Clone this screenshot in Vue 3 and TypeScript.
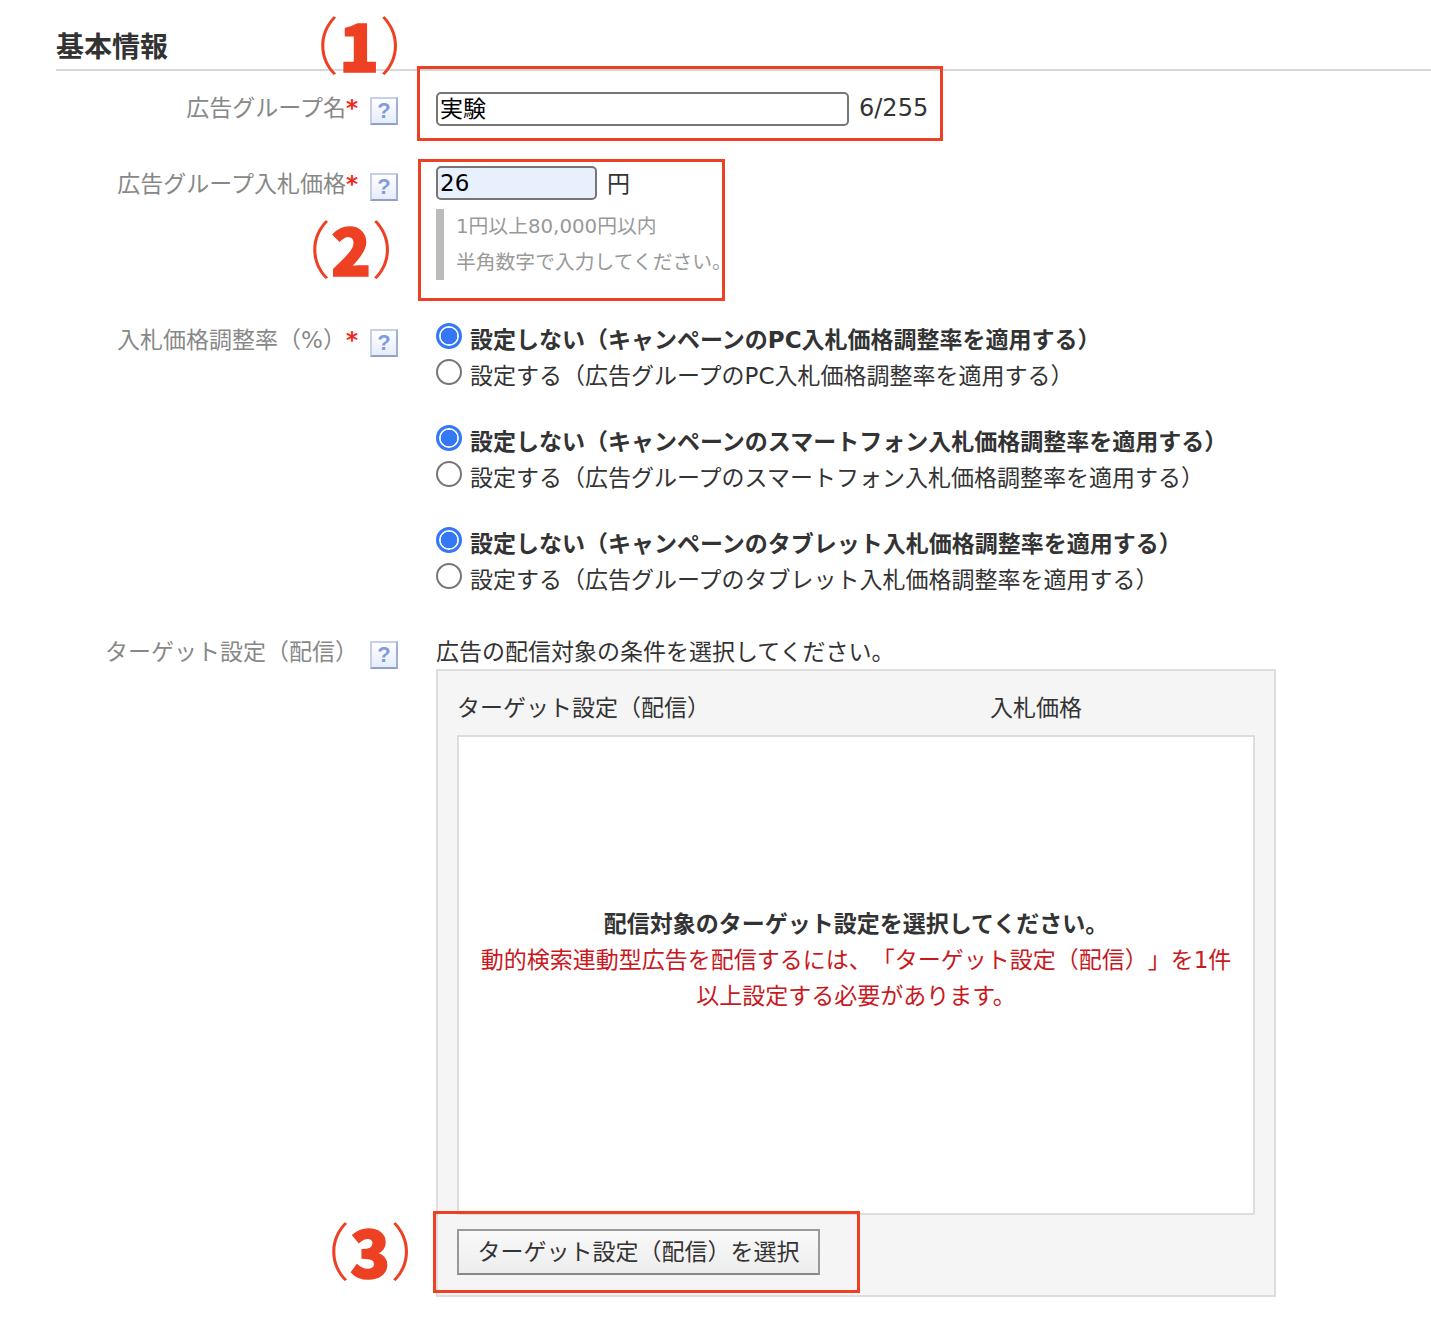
<script setup lang="ts">
interface Choice { off: string; on: string }
const choices: Choice[] = [
  { off: '設定しない（キャンペーンのPC入札価格調整率を適用する）', on: '設定する（広告グループのPC入札価格調整率を適用する）' },
  { off: '設定しない（キャンペーンのスマートフォン入札価格調整率を適用する）', on: '設定する（広告グループのスマートフォン入札価格調整率を適用する）' },
  { off: '設定しない（キャンペーンのタブレット入札価格調整率を適用する）', on: '設定する（広告グループのタブレット入札価格調整率を適用する）' },
]
</script>

<template>
  <div class="page">
    <h2 class="title">基本情報</h2>

    <div class="row row-name">
      <div class="label">広告グループ名<b class="req">*</b></div>
      <span class="help">?</span>
      <div class="field inline">
        <input class="text name" type="text" value="実験" />
        <span class="count">6/255</span>
      </div>
    </div>

    <div class="row row-price">
      <div class="label">広告グループ入札価格<b class="req">*</b></div>
      <span class="help">?</span>
      <div class="field">
        <div class="inline">
          <input class="text price" type="text" value="26" />
          <span>円</span>
        </div>
        <div class="hint">
          <p>1円以上80,000円以内</p>
          <p>半角数字で入力してください。</p>
        </div>
      </div>
    </div>

    <div class="row row-rate">
      <div class="label">入札価格調整率（%）<b class="req">*</b></div>
      <span class="help">?</span>
      <div class="field groups">
        <div v-for="(c, i) in choices" :key="i" class="group">
          <label class="radio strong"><input type="radio" :name="'g' + i" checked /><span>{{ c.off }}</span></label>
          <label class="radio"><input type="radio" :name="'g' + i" /><span>{{ c.on }}</span></label>
        </div>
      </div>
    </div>

    <div class="row row-target">
      <div class="label">ターゲット設定（配信）</div>
      <span class="help">?</span>
      <div class="field">
        <p class="lead">広告の配信対象の条件を選択してください。</p>
        <div class="panel">
          <div class="panel-head">
            <span class="col-a">ターゲット設定（配信）</span>
            <span>入札価格</span>
          </div>
          <div class="empty">
            <p class="empty-main">配信対象のターゲット設定を選択してください。</p>
            <p class="empty-note">動的検索連動型広告を配信するには、「ターゲット設定（配信）」を1件以上設定する必要があります。</p>
          </div>
          <button class="pick" type="button">ターゲット設定（配信）を選択</button>
        </div>
      </div>
    </div>

    <div class="mark box1"></div>
    <div class="mark box2"></div>
    <div class="mark box3"></div>
    <div class="num num1"><i>（</i><b>1</b><i>）</i></div>
    <div class="num num2"><i>（</i><b>2</b><i>）</i></div>
    <div class="num num3"><i>（</i><b>3</b><i>）</i></div>
  </div>
</template>

<style scoped>
.page {
  position: relative;
  width: 1431px;
  height: 1317px;
  overflow: hidden;
  padding-left: 56px;
  box-sizing: border-box;
  background: #fff;
  color: #333;
  font-family: "DejaVu Sans", "Noto Sans CJK JP", sans-serif;
  font-size: 23px;
  line-height: 36px;
  text-spacing-trim: space-all;
}
p { margin: 0; }
.title {
  margin: 0;
  padding: 31px 0 4px;
  font-size: 28px;
  line-height: 34px;
  font-weight: 700;
  border-bottom: 2px solid #d8d8d8;
}
.row {
  display: grid;
  grid-template-columns: 302px 78px 1fr;
  align-items: start;
}
.row-name { padding-top: 19px; }
.row-price { padding-top: 40px; }
.row-rate { padding-top: 42px; }
.row-target { padding-top: 36px; }
.label {
  color: #888;
  text-align: right;
  white-space: nowrap;
}
.req { color: #f0291c; font-weight: 700; }
.help {
  box-sizing: border-box;
  width: 28px;
  height: 28px;
  margin: 7px 0 0 12px;
  display: flex;
  align-items: center;
  justify-content: center;
  border: 2px solid #c4d0ea;
  border-right-color: #9fb0d0;
  border-bottom-color: #8fa2c6;
  background: linear-gradient(#fff, #e6ecfb);
  color: #829bdc;
  font-size: 22px;
  line-height: 1;
  font-weight: 700;
  font-family: "Liberation Sans", sans-serif;
}
.inline { display: flex; align-items: center; gap: 10px; }
.count { font-size: 24px; }
.text {
  box-sizing: border-box;
  height: 34px;
  padding: 0 2px;
  border: 2px solid #767676;
  border-radius: 5px;
  outline: none;
  color: #000;
  background: #fff;
  font: inherit;
}
.name { width: 413px; margin-top: 2px; }
.price { width: 161px; margin-bottom: 2px; background: #e8f0fe; }
.hint {
  box-sizing: border-box;
  width: 290px;
  margin-top: 7px;
  padding-left: 12px;
  border-left: 8px solid #bbb;
  color: #999;
  font-size: 19.8px;
  white-space: nowrap;
  line-height: 36px;
  height: 71px;
}
.groups { display: flex; flex-direction: column; gap: 30px; }
.radio { display: flex; align-items: center; gap: 8px; white-space: nowrap; height: 36px; }
.strong { font-weight: 700; }
.radio input {
  appearance: none;
  box-sizing: border-box;
  width: 26px;
  height: 26px;
  margin: -8px 0 0;
  border: 2px solid #767676;
  border-radius: 50%;
  background: #fff;
  flex: none;
}
.radio input:checked {
  border: 3px solid #3478f6;
  background: radial-gradient(circle, #3478f6 0 8px, #fff 8.6px);
}
.lead { height: 35px; }
.panel {
  box-sizing: border-box;
  width: 840px;
  height: 628px;
  border: 2px solid #ddd;
  background: #f5f5f5;
  padding: 19px 19px 0;
}
.panel-head { display: flex; height: 45px; }
.col-a { width: 533px; }
.empty {
  box-sizing: border-box;
  height: 480px;
  border: 2px solid #ddd;
  background: #fff;
  padding: 0 20px 30px;
  display: flex;
  flex-direction: column;
  justify-content: center;
  text-align: center;
}
.empty-main { font-weight: 700; }
.empty-note { color: #c8191e; }
.pick {
  display: block;
  box-sizing: border-box;
  width: 363px;
  height: 46px;
  margin-top: 14px;
  border: 2px solid #999;
  border-bottom-color: #888;
  border-radius: 0;
  background: linear-gradient(#f9f9f9, #ededed);
  color: #333;
  font: inherit;
  padding: 0;
}
.mark {
  position: absolute;
  box-sizing: border-box;
  border: 3px solid #ee4023;
  pointer-events: none;
}
.box1 { left: 417px; top: 66px; width: 526px; height: 75px; }
.box2 { left: 418px; top: 159px; width: 307px; height: 142px; }
.box3 { left: 433px; top: 1211px; width: 427px; height: 82px; }
.num {
  position: absolute;
  display: flex;
  align-items: center;
  height: 60px;
  color: #ee4023;
  font-family: "Noto Sans CJK JP", sans-serif;
  white-space: nowrap;
}
.num i { font-style: normal; font-weight: 300; font-size: 62px; line-height: 60px; }
.num b { font-weight: 900; font-size: 66px; line-height: 60px; -webkit-text-stroke: 1.5px #ee4023; }
.num1 { left: 277px; top: 13px; }
.num2 { left: 269px; top: 217px; }
.num3 { left: 288px; top: 1219px; }
</style>
